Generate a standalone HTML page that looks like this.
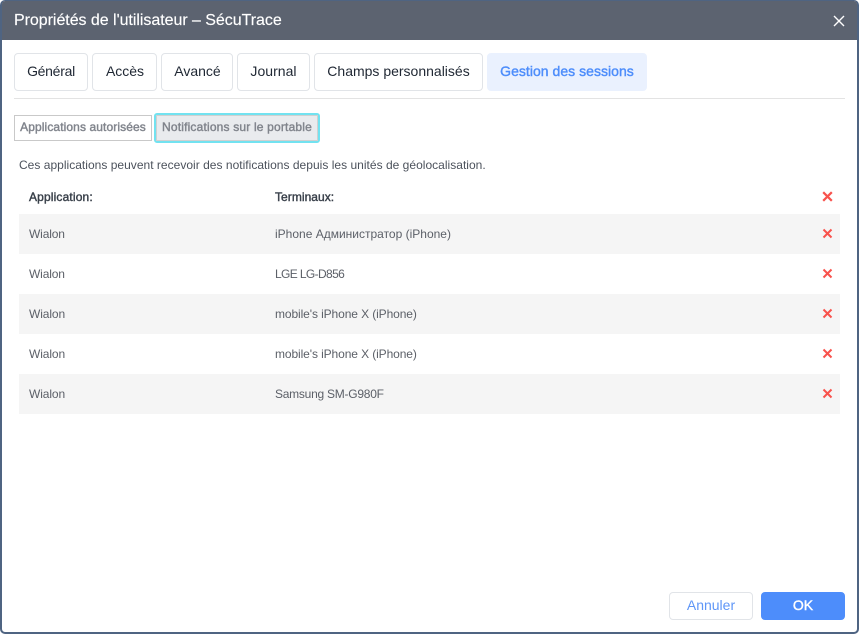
<!DOCTYPE html>
<html lang="fr"><head><meta charset="utf-8"><title>Propriétés de l'utilisateur</title>
<style>
html,body{margin:0;padding:0;background:#fff}
body{width:859px;height:634px;overflow:hidden;position:relative;font-family:"Liberation Sans",sans-serif}
.a{position:absolute;box-sizing:border-box}
.t{position:absolute;white-space:nowrap}
.tab{position:absolute;box-sizing:border-box;top:53px;height:38px;border:1px solid #e1e4e8;border-radius:4px;background:#fff;color:#1f2733;font-size:14px;line-height:35px;text-align:center;white-space:nowrap}
.row{position:absolute;left:19px;width:821px;height:40px}
.g{background:#f5f5f5}
.c{position:absolute;font-size:12px;line-height:14px;color:#5c6068;white-space:nowrap}
.m{-webkit-text-stroke:.42px currentColor}
.x{position:absolute;left:822px;width:11px;height:11px}
</style></head><body>
<div class="a" style="left:0;top:0;width:859px;height:634px;border:2px solid #4f6482;border-top-width:1px;border-radius:5px;"></div>
<div class="a" style="left:2px;top:1px;width:855px;height:39px;background:#5c6370;border-radius:3px 3px 0 0"></div>
<div class="t" style="left:14px;top:11px;font-size:16px;line-height:19px;color:#fff;letter-spacing:-.04px;-webkit-text-stroke:.15px #fff">Propriétés de l'utilisateur – SécuTrace</div>
<svg class="a" style="left:833px;top:15px" width="12" height="12" viewBox="0 0 12 12"><path d="M1 1L11 11M11 1L1 11" stroke="#fff" stroke-width="1.4" fill="none"/></svg>

<div class="tab" style="left:14px;width:74px;letter-spacing:-.28px">Général</div>
<div class="tab" style="left:92px;width:65px;padding-left:1px">Accès</div>
<div class="tab" style="left:161px;width:72px;padding-left:1px">Avancé</div>
<div class="tab" style="left:237px;width:73px;letter-spacing:.03px">Journal</div>
<div class="tab" style="left:314px;width:169px;letter-spacing:0">Champs personnalisés</div>
<div class="tab m" style="left:487px;width:160px;border-color:#eaf1fe;background:#eaf1fe;color:#4d8dfb;letter-spacing:.03px">Gestion des sessions</div>
<div class="a" style="left:14px;top:98px;width:831px;height:1px;background:#e3e3e3"></div>

<div class="a m" style="left:14px;top:115px;width:138px;height:26px;border:1px solid #c9c9c9;background:#fff;color:#80848c;font-size:12px;line-height:23px;text-align:center;white-space:nowrap;letter-spacing:.1px">Applications autorisées</div>
<div class="a" style="left:154px;top:113px;width:166px;height:30px;border:2px solid #72e2f0;border-radius:3px;background:#fff"></div>
<div class="a m" style="left:156px;top:115px;width:162px;height:26px;border:1px solid #d0d0d0;background:#e9ebee;color:#80848c;font-size:12px;line-height:23px;text-align:center;white-space:nowrap;letter-spacing:.18px">Notifications sur le portable</div>

<div class="t" style="left:19px;top:158px;font-size:12px;line-height:14px;color:#4c525c;letter-spacing:.02px">Ces applications peuvent recevoir des notifications depuis les unités de géolocalisation.</div>

<div class="c m" style="left:29px;top:190px;color:#39404a;letter-spacing:.15px">Application:</div>
<div class="c m" style="left:275px;top:190px;color:#39404a;letter-spacing:.05px">Terminaux:</div>
<svg class="x" style="top:191px" viewBox="0 0 11 11"><path d="M1.2 1.2L9.8 9.8M9.8 1.2L1.2 9.8" stroke="#f8524c" stroke-width="2.2"/></svg>

<div class="row g" style="top:214px"></div>
<div class="row g" style="top:294px"></div>
<div class="row g" style="top:374px"></div>

<div class="c" style="left:29px;top:227px;letter-spacing:-.15px">Wialon</div>
<div class="c" style="left:275px;top:227px">iPhone Администратор (iPhone)</div>
<svg class="x" style="top:228px" viewBox="0 0 11 11"><path d="M1.5 1.5L9.5 9.5M9.5 1.5L1.5 9.5" stroke="#f8524c" stroke-width="2"/></svg>

<div class="c" style="left:29px;top:267px;letter-spacing:-.15px">Wialon</div>
<div class="c" style="left:275px;top:267px;letter-spacing:-.62px">LGE LG-D856</div>
<svg class="x" style="top:268px" viewBox="0 0 11 11"><path d="M1.5 1.5L9.5 9.5M9.5 1.5L1.5 9.5" stroke="#f8524c" stroke-width="2"/></svg>

<div class="c" style="left:29px;top:307px;letter-spacing:-.1px">Wialon</div>
<div class="c" style="left:275px;top:307px;letter-spacing:-.1px">mobile's iPhone X (iPhone)</div>
<svg class="x" style="top:308px" viewBox="0 0 11 11"><path d="M1.5 1.5L9.5 9.5M9.5 1.5L1.5 9.5" stroke="#f8524c" stroke-width="2"/></svg>

<div class="c" style="left:29px;top:347px;letter-spacing:-.1px">Wialon</div>
<div class="c" style="left:275px;top:347px;letter-spacing:-.1px">mobile's iPhone X (iPhone)</div>
<svg class="x" style="top:348px" viewBox="0 0 11 11"><path d="M1.5 1.5L9.5 9.5M9.5 1.5L1.5 9.5" stroke="#f8524c" stroke-width="2"/></svg>

<div class="c" style="left:29px;top:387px;letter-spacing:-.1px">Wialon</div>
<div class="c" style="left:275px;top:387px;letter-spacing:-.25px">Samsung SM-G980F</div>
<svg class="x" style="top:388px" viewBox="0 0 11 11"><path d="M1.5 1.5L9.5 9.5M9.5 1.5L1.5 9.5" stroke="#f8524c" stroke-width="2"/></svg>

<div class="a" style="left:669px;top:592px;width:84px;height:28px;border:1px solid #e1e4e8;border-radius:4px;background:#fff;color:#5f96f7;font-size:14px;line-height:24px;text-align:center">Annuler</div>
<div class="a m" style="left:761px;top:592px;width:84px;height:28px;border-radius:4px;background:#4d8dfb;color:#fff;font-size:14px;line-height:26px;text-align:center">OK</div>
</body></html>
